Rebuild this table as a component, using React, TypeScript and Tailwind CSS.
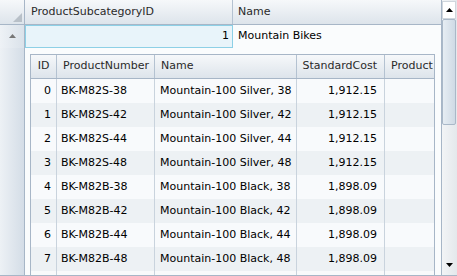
const rows = [
  { id: 0, num: "BK-M82S-38", name: "Mountain-100 Silver, 38", cost: "1,912.15" },
  { id: 1, num: "BK-M82S-42", name: "Mountain-100 Silver, 42", cost: "1,912.15" },
  { id: 2, num: "BK-M82S-44", name: "Mountain-100 Silver, 44", cost: "1,912.15" },
  { id: 3, num: "BK-M82S-48", name: "Mountain-100 Silver, 48", cost: "1,912.15" },
  { id: 4, num: "BK-M82B-38", name: "Mountain-100 Black, 38", cost: "1,898.09" },
  { id: 5, num: "BK-M82B-42", name: "Mountain-100 Black, 42", cost: "1,898.09" },
  { id: 6, num: "BK-M82B-44", name: "Mountain-100 Black, 44", cost: "1,898.09" },
  { id: 7, num: "BK-M82B-48", name: "Mountain-100 Black, 48", cost: "1,898.09" },
];

const head = "bg-gradient-to-b from-[#f6f8fa] to-[#dde4eb] text-[#2a2a2a]";

function Triangle({ dir }: { dir: "up" | "down" }) {
  return (
    <svg width="7" height="4" viewBox="0 0 7 4">
      {dir === "up" ? <path d="M0 4 L3.5 0 L7 4 Z" fill="currentColor" /> : <path d="M0 0 L3.5 4 L7 0 Z" fill="currentColor" />}
    </svg>
  );
}

export default function App() {
  return (
    <div
      className="w-[457px] h-[276px] flex overflow-hidden bg-[#fafcfd] border-b border-[#a7b6c7] text-[11px] text-black"
      style={{ fontFamily: '"DejaVu Sans", Verdana, sans-serif' }}
    >
      {/* main grid */}
      <div className="flex-1 flex flex-col min-w-0">
        {/* header row */}
        <div className="flex h-[25px] border-b border-[#a7b6c7] shrink-0">
          <div className={`w-[25px] border-r border-[#a7b6c7] ${head} flex items-end justify-end p-[2px]`}>
            <svg width="9" height="9" viewBox="0 0 9 9">
              <path d="M9 0 L9 9 L0 9 Z" fill="#b8c0c8" />
            </svg>
          </div>
          <div className={`w-[208px] border-r border-[#b4c2d1] ${head} flex items-center pl-[6px]`}>ProductSubcategoryID</div>
          <div className={`flex-1 ${head} flex items-center pl-[5px]`}>Name</div>
        </div>

        {/* master row */}
        <div className="flex h-[23px] shrink-0">
          <div className="w-[25px] border-r border-[#a7b6c7] bg-gradient-to-r from-[#eef2f6] to-[#dae2ea] flex items-center justify-center text-[#777] pb-[2px]">
            <Triangle dir="up" />
          </div>
          <div className="w-[208px] bg-[#e8f4fa] border border-[#8dd0e6] flex items-center justify-end pr-[3px]">1</div>
          <div className="flex-1 flex items-center pl-[5px]">Mountain Bikes</div>
        </div>

        {/* detail area */}
        <div className="flex flex-1 min-h-0">
          <div className="w-[25px] shrink-0 border-r border-[#a7b6c7] bg-gradient-to-r from-[#edf1f5] to-[#d4dde7]" />
          <div className="flex-1 pl-[5px] pt-[6px] pr-[6px] min-w-0">
            <div className="border border-[#a7b6c7] border-b-0 h-full overflow-hidden bg-[#f8fafb]">
              <div className="flex h-[24px] border-b border-[#a7b6c7]">
                <div className={`w-[26px] border-r border-[#b4c2d1] ${head} flex items-center justify-center`}>ID</div>
                <div className={`w-[98px] border-r border-[#b4c2d1] ${head} flex items-center pl-[6px]`}>ProductNumber</div>
                <div className={`w-[142px] border-r border-[#b4c2d1] ${head} flex items-center pl-[6px]`}>Name</div>
                <div className={`w-[88px] border-r border-[#b4c2d1] ${head} flex items-center justify-end pr-[7px]`}>StandardCost</div>
                <div className={`flex-1 ${head} flex items-center pl-[6px] whitespace-nowrap overflow-hidden`}>Product</div>
              </div>
              {rows.map((r) => (
                <div key={r.id} className={`flex h-[24px] ${r.id % 2 === 1 ? "bg-[#edf1f4]" : "bg-[#f8fafc]"}`}>
                  <div className="w-[26px] border-r border-[#c9d3dd] flex items-center justify-end pr-[5px]">{r.id}</div>
                  <div className="w-[98px] border-r border-[#c9d3dd] flex items-center pl-[4px] whitespace-nowrap">{r.num}</div>
                  <div className="w-[142px] border-r border-[#c9d3dd] flex items-center pl-[5px] whitespace-nowrap">{r.name}</div>
                  <div className="w-[88px] border-r border-[#c9d3dd] flex items-center justify-end pr-[7px]">{r.cost}</div>
                  <div className="flex-1" />
                </div>
              ))}
              <div className="flex h-[24px]">
                <div className="w-[26px] border-r border-[#c9d3dd]" />
                <div className="w-[98px] border-r border-[#c9d3dd]" />
                <div className="w-[142px] border-r border-[#c9d3dd]" />
                <div className="w-[88px] border-r border-[#c9d3dd]" />
              </div>
            </div>
          </div>
        </div>
      </div>

      {/* vertical scrollbar */}
      <div className="w-[16px] shrink-0 border-l border-[#a7b6c7] bg-gradient-to-r from-[#f2f4f6] to-[#e4e8ec] flex flex-col">
        <div className="h-[18px] mt-[1px] mr-[1px] bg-white border border-[#cfd6dd] flex items-center justify-center text-black">
          <Triangle dir="up" />
        </div>
        <div className="h-[106px] mr-[1px] bg-gradient-to-r from-[#e6edf3] to-[#cfdae5] border border-[#a9b8c8] rounded-[2px]" />
        <div className="flex-1" />
        <div className="h-[16px] flex items-center justify-center text-black pb-[4px]">
          <Triangle dir="down" />
        </div>
      </div>
    </div>
  );
}
